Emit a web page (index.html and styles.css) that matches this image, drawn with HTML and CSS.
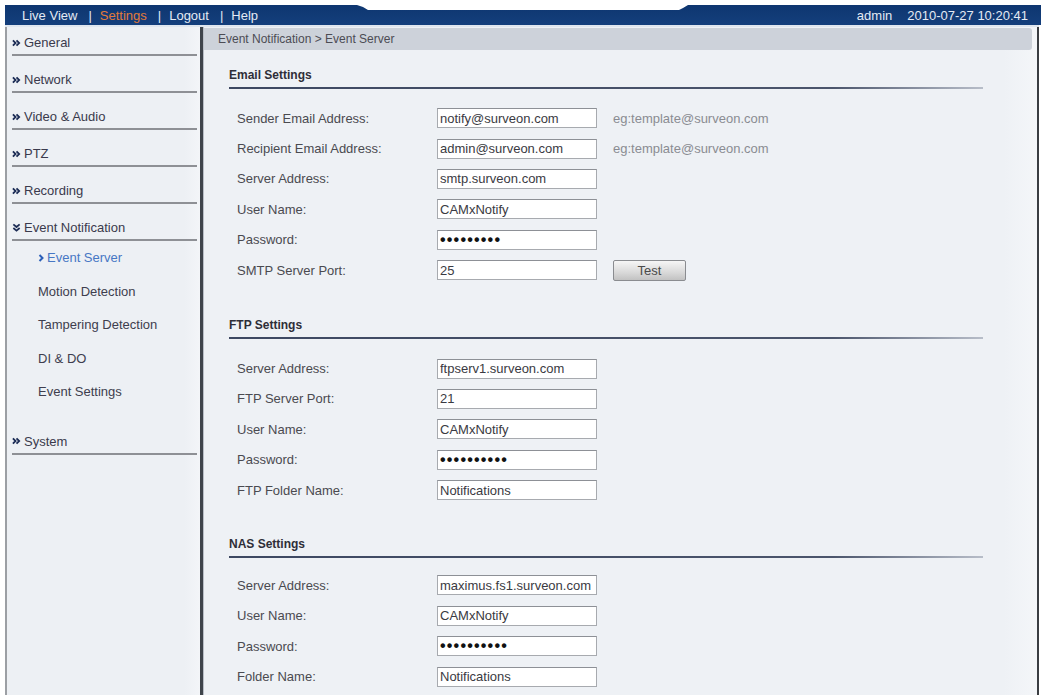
FILE: index.html
```html
<!DOCTYPE html>
<html lang="en">
<head>
<meta charset="utf-8">
<title>Event Server</title>
<link rel="stylesheet" href="styles.css">
</head>
<body>
<div class="app">
  <header class="topbar">
    <nav class="topnav">
      <a class="topnav-link">Live View</a><span class="sep">|</span>
      <a class="topnav-link is-current">Settings</a><span class="sep">|</span>
      <a class="topnav-link">Logout</a><span class="sep">|</span>
      <a class="topnav-link">Help</a>
    </nav>
    <div class="status"><span class="user">admin</span><span class="clock">2010-07-27 10:20:41</span></div>
  </header>
  <div class="strip"></div>

  <div class="main">
    <aside class="sidebar">
      <ul class="menu">
        <li class="menu-item first"><svg class="ico" viewBox="0 0 10 8"><path d="M1 1l3 3-3 3M5 1l3 3-3 3"/></svg>General</li>
        <li class="menu-item"><svg class="ico" viewBox="0 0 10 8"><path d="M1 1l3 3-3 3M5 1l3 3-3 3"/></svg>Network</li>
        <li class="menu-item"><svg class="ico" viewBox="0 0 10 8"><path d="M1 1l3 3-3 3M5 1l3 3-3 3"/></svg>Video &amp; Audio</li>
        <li class="menu-item"><svg class="ico" viewBox="0 0 10 8"><path d="M1 1l3 3-3 3M5 1l3 3-3 3"/></svg>PTZ</li>
        <li class="menu-item"><svg class="ico" viewBox="0 0 10 8"><path d="M1 1l3 3-3 3M5 1l3 3-3 3"/></svg>Recording</li>
        <li class="menu-item open"><svg class="ico" viewBox="0 0 10 10"><path d="M1.5 1.5l3.5 3 3.5-3M1.5 5.5l3.5 3 3.5-3"/></svg>Event Notification</li>
        <li class="submenu">
          <ul>
            <li class="sub-item active"><svg class="sub-ico" viewBox="0 0 6 8"><path d="M1.5 1l3 3-3 3"/></svg>Event Server</li>
            <li class="sub-item">Motion Detection</li>
            <li class="sub-item">Tampering Detection</li>
            <li class="sub-item">DI &amp; DO</li>
            <li class="sub-item">Event Settings</li>
          </ul>
        </li>
        <li class="menu-item system"><svg class="ico" viewBox="0 0 10 8"><path d="M1 1l3 3-3 3M5 1l3 3-3 3"/></svg>System</li>
      </ul>
    </aside>

    <section class="content">
      <div class="breadcrumb">Event Notification &gt; Event Server</div>

      <div class="group first">
        <h2 class="group-title">Email Settings</h2>
        <div class="rows">
          <div class="row"><label>Sender Email Address:</label><input class="field" value="notify@surveon.com" readonly><span class="hint">eg:template@surveon.com</span></div>
          <div class="row"><label>Recipient Email Address:</label><input class="field" value="admin@surveon.com" readonly><span class="hint">eg:template@surveon.com</span></div>
          <div class="row"><label>Server Address:</label><input class="field" value="smtp.surveon.com" readonly></div>
          <div class="row"><label>User Name:</label><input class="field" value="CAMxNotify" readonly></div>
          <div class="row"><label>Password:</label><input class="field pass" type="password" value="123456789" readonly></div>
          <div class="row"><label>SMTP Server Port:</label><input class="field" value="25" readonly><button class="btn" type="button">Test</button></div>
        </div>
      </div>

      <div class="group">
        <h2 class="group-title">FTP Settings</h2>
        <div class="rows">
          <div class="row"><label>Server Address:</label><input class="field" value="ftpserv1.surveon.com" readonly></div>
          <div class="row"><label>FTP Server Port:</label><input class="field" value="21" readonly></div>
          <div class="row"><label>User Name:</label><input class="field" value="CAMxNotify" readonly></div>
          <div class="row"><label>Password:</label><input class="field pass" type="password" value="1234567890" readonly></div>
          <div class="row"><label>FTP Folder Name:</label><input class="field" value="Notifications" readonly></div>
        </div>
      </div>

      <div class="group compact">
        <h2 class="group-title">NAS Settings</h2>
        <div class="rows">
          <div class="row"><label>Server Address:</label><input class="field" value="maximus.fs1.surveon.com" readonly></div>
          <div class="row"><label>User Name:</label><input class="field" value="CAMxNotify" readonly></div>
          <div class="row"><label>Password:</label><input class="field pass" type="password" value="1234567890" readonly></div>
          <div class="row"><label>Folder Name:</label><input class="field" value="Notifications" readonly></div>
        </div>
      </div>
    </section>
  </div>
</div>
</body>
</html>
```

FILE: styles.css
```css
html, body {
  margin: 0;
  height: 100%;
  background: #ffffff;
  font-family: "Liberation Sans", Arial, sans-serif;
  overflow: hidden;
}

.app {
  display: flex;
  flex-direction: column;
  height: 100%;
  padding: 5px 4px 0 5px;
  box-sizing: border-box;
}

/* ---- top navigation bar ---- */
.topbar {
  height: 20px;
  margin-right: -2px;
  background: linear-gradient(#0e3670, #143f7c);
  display: flex;
  align-items: center;
  justify-content: space-between;
  padding: 0 13px 0 17px;
  color: #e4eaf4;
  font-size: 13px;
  clip-path: polygon(0 0, 352px 0, 358px 2px, 363px 5px, 674px 5px, 678px 3px, 683px 0, 100% 0, 100% 100%, 0 100%);
}
.topnav { display: flex; align-items: center; padding-top: 1px; }
.topnav-link { color: #e4eaf4; }
.topnav-link.is-current { color: #e27a3a; }
.sep { margin: 0 8px 0 11px; color: #e4eaf4; }
.status { display: flex; gap: 15px; padding-top: 1px; }

.strip {
  height: 2px;
  background: #dfe6ef;
}

.main {
  flex: 1;
  display: flex;
  min-height: 0;
}

/* ---- left menu ---- */
.sidebar {
  width: 198px;
  flex: none;
  box-sizing: border-box;
  border-left: 2px solid #9c9fa4;
  border-right: 3px solid #3f444b;
  background: linear-gradient(90deg, #edf0f4 0, #edf0f4 92%, #f3f5f8 100%);
  font-size: 13px;
  color: #3a3a4c;
}
.menu, .submenu ul {
  list-style: none;
  margin: 0;
  padding: 0;
}
.menu-item {
  display: flex;
  align-items: center;
  margin: 0 3px 0 5px;
  padding: 16px 0 4px;
  line-height: 15px;
  border-bottom: 2px solid #8e9095;
}
.menu-item.first { padding-top: 8px; }
.menu-item.system { margin-top: 9px; }
.ico {
  width: 9px;
  height: 8px;
  margin-right: 3px;
  fill: none;
  stroke: #1c2c55;
  stroke-width: 2;
}
.menu-item.open .ico { width: 9px; height: 9px; }

.sub-item {
  display: flex;
  align-items: center;
  padding: 9px 0 9.5px 31px;
  line-height: 15px;
  color: #3e3e4e;
}
.sub-item.active { color: #4777c4; }
.sub-ico {
  width: 6px;
  height: 8px;
  margin-right: 3px;
  fill: none;
  stroke: #2b5fb8;
  stroke-width: 2;
}

/* ---- content area ---- */
.content {
  flex: 1;
  border-left: 1px solid #b9bec6;
  border-right: 2px solid #3a3d42;
  background: linear-gradient(90deg, #eef1f5 0, #eef1f5 96%, #f4f6f9 100%);
  padding-top: 1px;
  overflow: hidden;
}
.breadcrumb {
  height: 22px;
  line-height: 22px;
  margin-right: 5px;
  padding-left: 14px;
  background: #cdd2da;
  border-radius: 0 3px 3px 0;
  font-size: 12px;
  color: #4c4c54;
}

.group {
  margin: 33px 54px 0 25px;
}
.group.first { margin-top: 18px; }
.group.compact { margin-top: 32px; }
.group-title {
  margin: 0;
  font-size: 12px;
  font-weight: bold;
  line-height: 14px;
  color: #2e2e38;
  padding-bottom: 5px;
  border-bottom: 2px solid;
  border-image: linear-gradient(90deg, #3d4862 0, #4b556c 80%, #b8bec9 100%) 1;
}
.rows { margin-top: 14px; padding-left: 8px; }
.group.compact .rows { margin-top: 12px; }
.row {
  display: grid;
  grid-template-columns: 184px 160px auto;
  column-gap: 16px;
  align-items: center;
  height: 30.4px;
  font-size: 13px;
  color: #4a4a50;
}
.row label { white-space: nowrap; }

.field {
  box-sizing: border-box;
  width: 160px;
  height: 20px;
  padding: 0 2px;
  margin: 0;
  border: 1px solid #a7aaaf;
  border-top-color: #8d9096;
  background: #ffffff;
  font-family: "Liberation Sans", Arial, sans-serif;
  font-size: 13px;
  color: #3a3a42;
  outline: none;
}
.field.pass {
  font-size: 16px;
  letter-spacing: 1.2px;
  color: #111111;
  font-weight: bold;
}

.hint { color: #8a8c92; white-space: nowrap; }

.btn {
  justify-self: start;
  width: 73px;
  height: 21px;
  border: 1px solid #8a8c90;
  border-radius: 2px;
  background: linear-gradient(#f6f6f6, #d9d9d9 60%, #c2c2c2);
  font-family: "Liberation Sans", Arial, sans-serif;
  font-size: 13px;
  color: #4a4a4a;
  padding: 0;
}
```
